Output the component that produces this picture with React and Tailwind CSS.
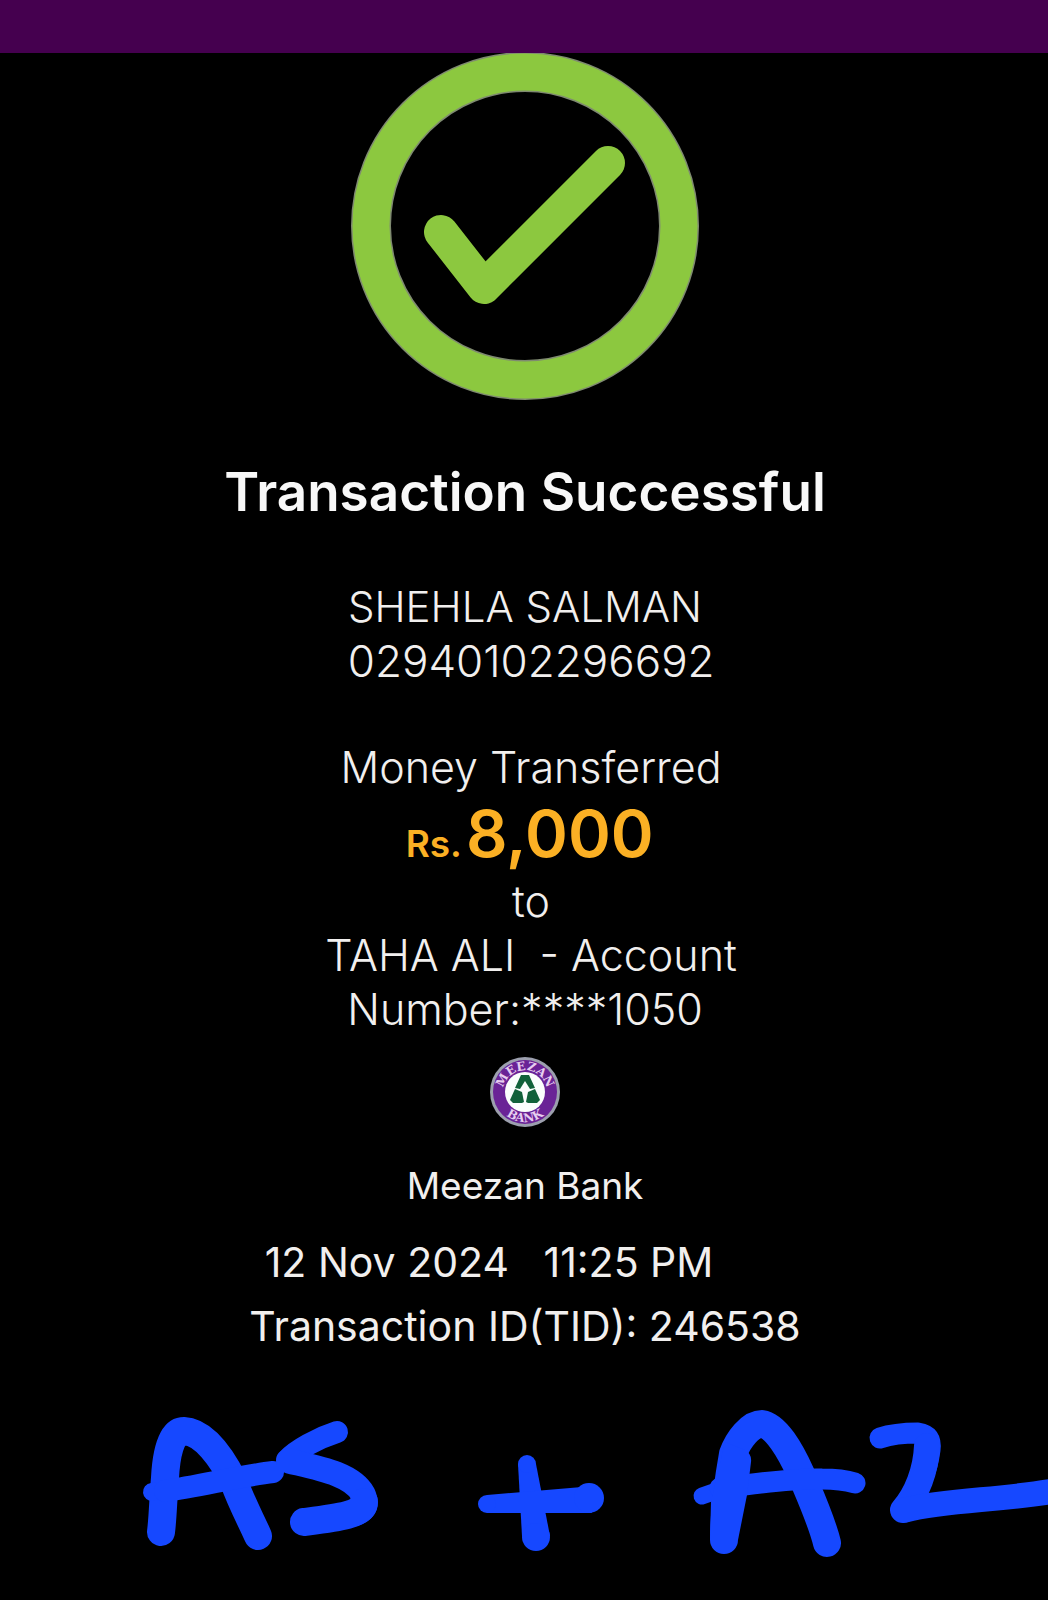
function SuccessIcon() {
  return (
    <svg viewBox="0 1 348 347" className="block w-[348px]" role="img" aria-label="Success">
      <circle cx="174" cy="174" r="154" fill="none" stroke="#7f8a70" strokeWidth="40" />
      <circle cx="174" cy="174" r="154" fill="none" stroke="#8cc83f" strokeWidth="37" />
      <path
        d="M90 180 L133 235 L257 111"
        fill="none"
        stroke="#8cc83f"
        strokeWidth="34"
        strokeLinecap="round"
        strokeLinejoin="round"
      />
    </svg>
  );
}

function BankLogo() {
  return (
    <svg viewBox="0 0 72 72" className="block w-[72px]" role="img" aria-label="Meezan Bank logo">
      <defs>
        <path id="arc-top" d="M23 54 A22 22 0 1 1 49 54" />
        <path id="arc-bottom" d="M6 36 A30 30 0 0 0 66 36" />
      </defs>
      <circle cx="36" cy="36" r="35" fill="#9c9fae" />
      <circle cx="36" cy="36" r="32" fill="#6a2396" />
      <circle cx="36" cy="36" r="20" fill="#fbfdfc" />
      <path d="M32 19 H40 L46 32 L41 33 L36 25 L31 33 L26 32 Z" fill="#12613a" />
      <path d="M26 33 L33 36 L35 46 L33 47 H24 L21 44 Z" fill="#12613a" />
      <path d="M46 33 L39 36 L37 46 L39 47 H48 L51 44 Z" fill="#12613a" />
      <g
        fill="#e6cdf0"
        textAnchor="middle"
        className="font-['DejaVu_Serif',serif] text-[12px] font-bold"
      >
        <text>
          <textPath href="#arc-top" startOffset="50%">MEEZAN</textPath>
        </text>
        <text>
          <textPath href="#arc-bottom" startOffset="50%">BANK</textPath>
        </text>
      </g>
    </svg>
  );
}

function PenMarks() {
  return (
    <svg viewBox="0 0 1048 180" className="mt-[34px] block w-full" role="img" aria-label="AS + A2">
      <g fill="none" stroke="#1648ff" strokeLinecap="round" strokeLinejoin="round">
        <path strokeWidth="28" d="M161 140 C163 124 163 108 165 86 C166 66 170 39 184 39 C204 40 222 66 234 90 C242 112 251 128 258 144" />
        <path strokeWidth="18" d="M152 100 L180 97" />
        <path strokeWidth="22" d="M165 99 C200 94 240 84 273 80" />
        <path strokeWidth="22" d="M337 40 C318 46 296 58 287 68" />
        <path strokeWidth="25" d="M289 69 C318 76 352 82 363 102 C373 124 348 124 304 130" />
        <path strokeWidth="28" d="M364 110 C364 123 336 126 304 130" />
        <path strokeWidth="28" d="M724 148 C724 120 728 90 733 62 C738 48 750 32 762 32 C776 34 790 58 801 82 C812 108 822 130 827 151" />
        <path strokeWidth="17" d="M702 104 L722 97" />
        <path strokeWidth="21" d="M720 96 C755 92 790 86 822 87 C838 87 845 88 855 91" />
        <path strokeWidth="21" d="M880 46 C892 42 905 41 918 41 C930 43 931 50 930 58 C927 82 918 100 904 117" />
        <path strokeWidth="26" d="M927 54 C926 78 917 102 903 118" />
        <path strokeWidth="25" d="M905 118 C950 107 1000 109 1060 98" />
      </g>
      <g fill="#1648ff">
        <path d="M518 72 L536 72 L550 144 L522 144 Z" />
        <circle cx="527" cy="72" r="9" />
        <circle cx="536" cy="145" r="14" />
        <path d="M487 103 L582 95 L592 121 L487 121 Z" />
        <circle cx="487" cy="112" r="9" />
        <circle cx="589" cy="106" r="15" />
        <path d="M725 50 L745 58 Q752 62 751 70 L747 103 L738 148 H710 L711 110 Z" />
      </g>
    </svg>
  );
}

export default function App() {
  return (
    <div className="flex min-h-screen flex-col overflow-hidden bg-black font-['Inter',sans-serif] text-[#f1efee]">
      <header className="h-[53px] bg-[#45004f]" />
      <main className="flex flex-col items-center pl-0.5 text-center">
        <SuccessIcon />
        <h1 className="mt-[60px] text-[53px] leading-[64px] font-semibold text-[#f8f8f8]">Transaction Successful</h1>

        <section className="mt-14 leading-[54px] font-light">
          <p className="text-[42px]">SHEHLA SALMAN</p>
          <p className="text-[44px]">&nbsp;02940102296692</p>
        </section>

        <section className="mt-[52px] text-[43px] leading-[54px] font-light">
          <p>&nbsp;Money Transferred</p>
          <p className="flex h-20 items-baseline justify-center gap-1 font-semibold text-[#fbb024]">
            <span className="text-[37px] leading-none">&nbsp;Rs.</span>
            <span className="text-[65px] leading-[80px]">8,000</span>
          </p>
          <p>&nbsp;to</p>
          <p>&nbsp;TAHA ALI&nbsp; - Account</p>
          <p>Number:****1050</p>
        </section>

        <div className="mt-5">
          <BankLogo />
        </div>
        <p className="mt-[34px] text-[37px] leading-[48px]">Meezan Bank</p>

        <section className="mt-5 text-[41px] leading-[64px]">
          <p className="pr-18">12 Nov 2024 &nbsp; 11:25 PM</p>
          <p>Transaction ID(TID): 246538</p>
        </section>
      </main>
      <PenMarks />
    </div>
  );
}
